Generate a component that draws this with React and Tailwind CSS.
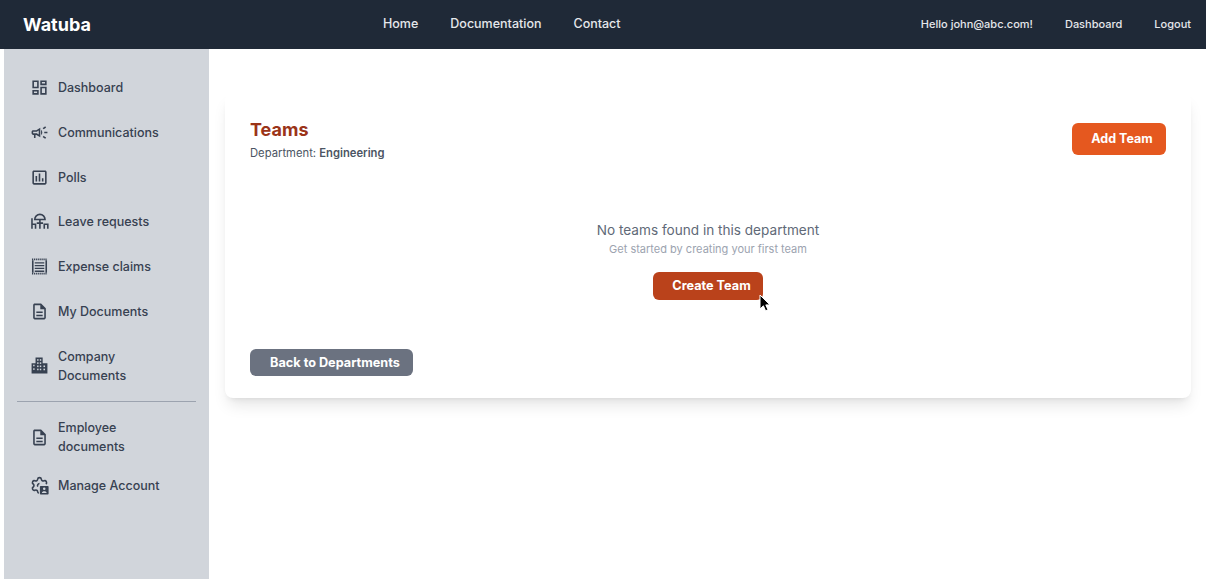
import React from 'react';
import { MdOutlineDashboard, MdOutlineCampaign, MdOutlinePoll, MdOutlineDescription } from 'react-icons/md';

const topLinks = ['Home', 'Documentation', 'Contact'];

const LeaveIcon = ({ className }) => (
  <svg viewBox="0 0 24 24" fill="none" stroke="currentColor" strokeWidth="2" className={className}>
    <path d="M6 9.5a6.5 6.5 0 0 1 13 0z" />
    <path d="M12.5 10v11M8.5 14h8" />
    <path d="M2.5 8v13M2.5 15.5H7V21" />
    <path d="M22.5 21v-5.5H18V21" />
  </svg>
);

const ExpenseIcon = ({ className }) => (
  <svg viewBox="0 0 24 24" fill="none" stroke="currentColor" strokeWidth="2" className={className}>
    <path d="M3.5 4v16M20.5 4v16" />
    <path d="M2.5 3h19M2.5 21h19" strokeDasharray="1.6 1" />
    <path d="M6 7.5h12M6 11h12M6 14.5h12M6 18h12" strokeWidth="1.6" />
  </svg>
);

const BuildingIcon = ({ className }) => (
  <svg viewBox="0 0 24 24" fill="currentColor" className={className}>
    <path d="M7 2h9v7h6v13H2V9h5z" />
    <g className="fill-[#d1d5db]">
      <rect x="9" y="4" width="1.8" height="2" />
      <rect x="12.4" y="4" width="1.8" height="2" />
      <rect x="4" y="11" width="1.8" height="2" />
      <rect x="9" y="8" width="1.8" height="2" />
      <rect x="12.4" y="8" width="1.8" height="2" />
      <rect x="9" y="12" width="1.8" height="2" />
      <rect x="12.4" y="12" width="1.8" height="2" />
      <rect x="17" y="12" width="2" height="2" />
      <rect x="4" y="15.5" width="1.8" height="2" />
      <rect x="9" y="16" width="1.8" height="2" />
      <rect x="12.4" y="16" width="1.8" height="2" />
      <rect x="17" y="16" width="2" height="2" />
    </g>
  </svg>
);

const ManageIcon = ({ className }) => (
  <svg viewBox="0 0 24 24" fill="none" stroke="currentColor" strokeWidth="2" className={className}>
    <path d="M9.671 4.136a2.34 2.34 0 0 1 4.659 0 2.34 2.34 0 0 0 3.319 1.915 2.34 2.34 0 0 1 2.33 4.033M4.02 13.915a2.34 2.34 0 0 0 0-3.831A2.34 2.34 0 0 1 6.35 6.051a2.34 2.34 0 0 0 3.319-1.915M4.02 13.915a2.34 2.34 0 0 0 2.33 4.033 2.34 2.34 0 0 1 3.32 1.915 2.34 2.34 0 0 0 1.4 1.9" />
    <path d="M12 9.5a2.6 2.6 0 0 0-2.2 3.8" />
    <rect x="12.5" y="12.5" width="11" height="11" rx="1" fill="currentColor" stroke="none" />
    <circle cx="18" cy="16" r="1.6" fill="#d1d5db" stroke="none" />
    <path d="M15 21.5c0-3 6-3 6 0z" fill="#d1d5db" stroke="none" />
  </svg>
);

const menuTop = [
  { label: 'Dashboard', icon: MdOutlineDashboard },
  { label: 'Communications', icon: MdOutlineCampaign },
  { label: 'Polls', icon: MdOutlinePoll },
  { label: 'Leave requests', icon: LeaveIcon },
  { label: 'Expense claims', icon: ExpenseIcon },
  { label: 'My Documents', icon: MdOutlineDescription },
  { label: 'Company Documents', icon: BuildingIcon },
];

const menuBottom = [
  { label: 'Employee documents', icon: MdOutlineDescription },
  { label: 'Manage Account', icon: ManageIcon },
];

const MenuItem = ({ item, className }) => {
  const Icon = item.icon;
  return (
    <a className={`flex items-center gap-[9px] pl-[26px] pr-4 text-[12.5px] leading-[19px] font-medium text-[#374151] ${className}`}>
      <Icon className="h-[19px] w-[19px] shrink-0 text-[#374151]" />
      <span className="w-[110px]">{item.label}</span>
    </a>
  );
};

const App = () => {
  return (
    <div className="h-[579px] overflow-hidden bg-white font-['Inter',sans-serif]">
      <header className="flex h-[49px] items-center bg-[#1f2937] pl-[23px] pr-[15px] text-white">
        <div className="w-[360px] text-[18px] font-bold">Watuba</div>
        <nav className="flex gap-8 text-[12.5px] font-medium text-[#e5e7eb]">
          {topLinks.map((link) => (
            <a key={link}>{link}</a>
          ))}
        </nav>
        <div className="ml-auto flex gap-8 text-[11px] font-medium text-[#e5e7eb]">
          <span>Hello john@abc.com!</span>
          <a>Dashboard</a>
          <a>Logout</a>
        </div>
      </header>

      <div className="flex">
        <aside className="ml-1 h-[530px] w-[205px] bg-[#d1d5db] pt-[16.2px]">
          {menuTop.map((item) => (
            <MenuItem key={item.label} item={item} className="py-[12.875px]" />
          ))}
          <div className="mx-[13px] mt-[3.8px] mb-2 border-t border-[#9ca3af]" />
          <div className="flex flex-col gap-1">
            {menuBottom.map((item) => (
              <MenuItem key={item.label} item={item} className="py-2" />
            ))}
          </div>
        </aside>

        <main className="flex-1 pt-[44px] pr-[15px] pl-4">
          <div className="rounded-lg bg-white px-[25px] pt-[22px] pb-[22px] shadow-lg">
            <div className="flex items-start justify-between">
              <div>
                <h1 className="text-[18px] leading-[30px] font-bold text-[#9b3418]">Teams</h1>
                <p className="text-[11.25px] leading-[16px] text-[#4b5563]">
                  Department: <span className="font-semibold">Engineering</span>
                </p>
              </div>
              <button className="mt-2 h-[32px] w-[94px] rounded-md bg-[#e5581f] pl-[6px] text-[12.5px] font-bold text-white">
                Add Team
              </button>
            </div>

            <div className="mt-[59px] flex flex-col items-center">
              <p className="text-[13.6px] leading-[20px] text-[#606977]">No teams found in this department</p>
              <p className="mt-[1px] text-[11px] leading-[16px] text-[#9ca3af]">Get started by creating your first team</p>
              <button className="relative mt-[15px] h-[28px] w-[110px] rounded-md bg-[#ba421b] pl-[7px] text-[12.7px] font-bold text-white">
                Create Team
                <svg viewBox="0 0 12 18" className="absolute top-[22px] left-[106px] h-[18px] w-[12px]">
                  <path d="M1 1v14l3.4-3.2 2.2 5 2.4-1-2.2-4.9H11z" fill="#000" stroke="#fff" strokeWidth="1" />
                </svg>
              </button>
            </div>

            <button className="mt-[49px] block h-[27px] w-[163px] rounded-md bg-[#6b7280] pl-[7px] text-[12.7px] font-bold text-white">
              Back to Departments
            </button>
          </div>
        </main>
      </div>
    </div>
  );
};

export default App;
